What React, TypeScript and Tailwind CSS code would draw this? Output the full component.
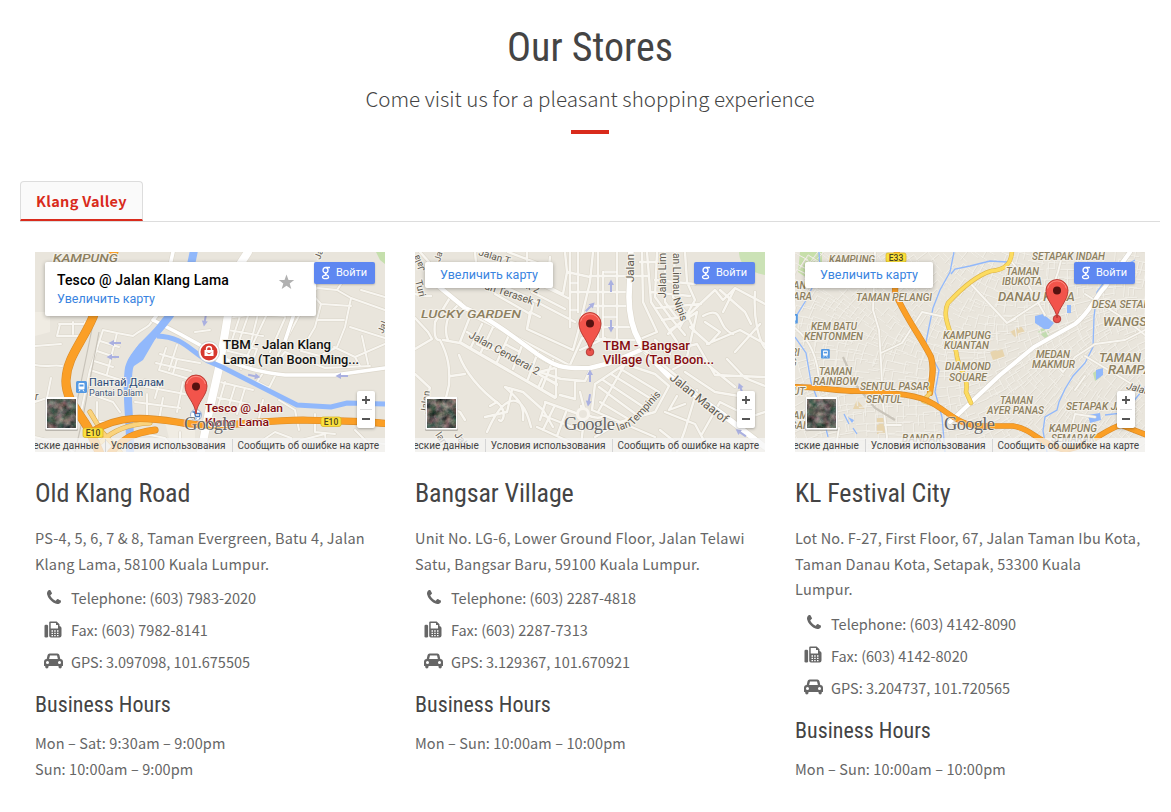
import React from "react";

type Label = { t: string; x: number; y: number; s?: number; w?: number; r?: number; c?: string; i?: boolean; b?: boolean };

const AREA = "#8d8060";
const STREET = "#5f5a50";

function MapLabel({ t, x, y, s = 10, w, r = 0, c = AREA, i = true, b = true }: Label) {
  return (
    <text
      x={x}
      y={y}
      fontSize={s}
      fontWeight={b ? 500 : 400}
      fontStyle={i ? "italic" : "normal"}
      fill={c}
      stroke="#f4f1ea"
      strokeWidth={2.2}
      strokeLinejoin="round"
      paintOrder="stroke"
      textLength={w}
      lengthAdjust="spacingAndGlyphs"
      transform={r ? `rotate(${r} ${x} ${y})` : undefined}
    >
      {t}
    </text>
  );
}

function Roads({ d, w = 2.6, c = "#f8f6f1", casing = "#dcd7cb" }: { d: string; w?: number; c?: string; casing?: string }) {
  return (
    <g fill="none" strokeLinejoin="round" strokeLinecap="round">
      <path d={d} stroke={casing} strokeWidth={w + 1.2} />
      <path d={d} stroke={c} strokeWidth={w} />
    </g>
  );
}

function Highway({ d, w = 7 }: { d: string; w?: number }) {
  return <Roads d={d} w={w} c="#fb9f26" casing="#d98b28" />;
}

function Pin({ x, y }: { x: number; y: number }) {
  return (
    <g transform={`translate(${x} ${y})`}>
      <circle cx="0" cy="0" r="3.8" fill="#e8524c" stroke="#a9302b" strokeWidth="0.8" />
      <path d="M0 -1C-1.5 -12 -11 -18 -11 -28.500A11 11 0 0 1 11 -28.500C11 -18 1.5 -12 0 -1Z" fill="#f2544b" stroke="#b6352e" strokeWidth="0.9" />
      <path d="M-9.4 -30.500A9.6 9.6 0 0 1 9.4 -30.500" fill="none" stroke="#ff8b80" strokeWidth="1" />
      <circle cx="0" cy="-28.500" r="4" fill="#561210" />
    </g>
  );
}

function Arrow({ x, y, r }: { x: number; y: number; r: number }) {
  return (
    <path transform={`translate(${x} ${y}) rotate(${r})`} d="M-6 -1H1V-3L6.500 0L1 3V1H-6Z" fill="#aab0e0" />
  );
}

function Station({ x, y }: { x: number; y: number }) {
  return (
    <g transform={`translate(${x} ${y})`}>
      <rect width="11" height="12" rx="1.500" fill="#5599e2" />
      <rect x="2.500" y="2" width="6" height="6.500" rx="1" fill="#fff" />
      <path d="M3.500 3.500H7.500V5.500H3.500Z" fill="#5599e2" />
      <path d="M3 10.500L4 9M8 10.500L7 9" stroke="#fff" />
    </g>
  );
}

function Shield({ t, x, y }: { t: string; x: number; y: number }) {
  return (
    <g>
      <rect x={x} y={y} width="20" height="9.500" rx="2" fill="#fbe03c" stroke="#d7b21c" strokeWidth="0.700" />
      <text x={x + 10} y={y + 8} fontSize="8.500" textAnchor="middle" fill="#4b4420" fontWeight="500">{t}</text>
    </g>
  );
}

function OldKlangMap() {
  return (
    <>
      <path d="M0 60H15V80L0 84ZM130 170H160V190H135Z" fill="#f0ece3" />
      <path d="M341 0H350V12L345 8Z" fill="#c5dfac" />
      <Roads
        w={2}
        d="M0 94L26 92M24 72H55M25 72L22 84H48M38 70V82M50 70V84M0 113C14 116 18 112 27 114M68 78L82 81L98 84M68 78L55 118L92 130M65 89L84 95M62 99L80 105M59 109L78 115M82 81L72 122M98 84C108 76 116 75 117 68M55 118L46 160M50 140L78 150L85 160M62 150V170H78M125 102L142 107L138 122M131 96L124 118L158 128M142 93L134 118M121 111L156 119M142 107L165 111M110 128L124 132L120 146M101 133L150 142M148 130L142 160M100 150L145 156M112 142V164M128 146L124 168M0 150L12 146L16 126M0 185L28 192L38 200M110 182L130 186L140 200M145 180V200M160 80L175 78M192 66L220 62L250 64M193 78L228 84M190 90L222 97L215 116M223 62L216 90M232 62L206 117M213 64L203 92M205 64L197 88M189 98L214 104M265 62L238 112M250 66L235 100M277 42L282 36L302 38L316 46L310 75L302 95L285 104L266 99L280 75L286 52L277 42M286 52L316 54M282 68H309M302 38L314 20L333 18M316 46L350 58M326 38L350 45M299 95L320 105L350 92M320 105L325 114M315 75L350 86M327 84L333 112M240 112L250 100L290 116L335 114M240 124L234 136L222 130L230 118M185 130L218 138M190 130L182 158M200 134L192 160M210 136L202 162M180 145L214 152M228 148L222 175M244 148L260 158L264 178M280 162V180L300 182M320 178L332 190L350 192M225 190L240 180L256 186L258 200M265 190V200M266 188L290 182L292 200"
      />
      <Roads w={3.6} d="M118 68L145 82L174 98C194 111 215 119 250 123H300L350 116M118 68L126 58L160 30M259 62L248 95M138 0L134 18" c="#fff" />
      <Roads w={8} d="M213 0L200 20L191 75L184 116L174 160L166 200" c="#fff" casing="#e0dbd0" />
      <path d="M155 0C150 26 152 50 128 77C118 90 88 104 83 119" fill="none" stroke="none" />
      <path d="M159 -2C155 20 148 50 128 72C118 86 98 100 94 116C90 140 96 170 95 200" fill="none" stroke="#91b8fb" strokeWidth="8" />
      <path d="M128 73L122 84L108 108L96 116L90 122L93 108L104 92L122 76Z" fill="#91b8fb" />
      <path d="M122 84C148 85 154 98 173 109L187 115L262 153L296 155L312 151L350 152" fill="none" stroke="#91b8fb" strokeWidth="5" />
      <path d="M60 62L42 150M64 80L48 165L40 200" stroke="#c8c3b9" fill="none" strokeWidth="1.200" />
      <Roads w={4} d="M55 160L67 180L85 200M66 190C78 178 95 172 115 171" c="#fad37d" casing="#d8a74b" />
      <Highway w={8} d="M80 -4L58 65C47 91 32 105 31 128C30 150 50 166 56 182L66 204" />
      <Highway w={6} d="M58 179C85 163 110 165 142 170C185 178 218 168 268 168C295 169 325 168 354 172M76 200C90 186 97 181 120 178" />
      <Arrow x={80} y={91} r={180} />
      <Arrow x={78} y={105} r={180} />
      <Arrow x={219} y={124} r={12} />
      <Arrow x={307} y={124} r={180} />
      <Arrow x={170} y={68} r={100} />
      <Shield t="E10" x={48} y={176} />
      <Shield t="E10" x={286} y={165} />
      <MapLabel t="KAMPUNG" x={18} y={9.500} s={11} w={65} />
      <MapLabel t="Jalan" x={285} y={8} s={9} r={-70} c={STREET} i={false} b={false} />
      <MapLabel t="Jal" x={348} y={82} s={9} r={-68} c={STREET} i={false} b={false} />
      <MapLabel t="r" x={0} y={148} s={10} c={STREET} b={false} />
      <Station x={41} y={129} />
      <MapLabel t="Пантай Далам" x={54} y={134} s={11} w={75} c="#2b4a78" i={false} b={false} />
      <MapLabel t="Pantai Dalam" x={54} y={144} s={9} w={54} c="#43577a" i={false} b={false} />
      <circle cx="174" cy="100" r="10.500" fill="#fff" stroke="#bbb" strokeWidth="0.600" />
      <circle cx="174" cy="100" r="8.500" fill="#d7382f" />
      <path d="M169.500 98H178.500V104H169.500Z" fill="#fff" />
      <path d="M171.500 98V97A2.500 2.500 0 0 1 176.500 97V98" fill="none" stroke="#fff" strokeWidth="1.400" />
      <path d="M172 100.500A2.200 2.200 0 0 0 176 100.500" fill="none" stroke="#d7382f" strokeWidth="1" />
      <MapLabel t="TBM - Jalan Klang" x={188} y={96.500} s={12} w={108} c="#111" i={false} />
      <MapLabel t="Lama (Tan Boon Ming..." x={188} y={111.500} s={12} w={136} c="#111" i={false} />
      <MapLabel t="Tesco @ Jalan" x={170} y={160} s={11.500} w={78} c="#850b10" i={false} />
      <MapLabel t="Klang Lama" x={170} y={174} s={11.500} w={64} c="#850b10" i={false} />
      <circle cx="161" cy="163" r="5.500" fill="#fff" stroke="#7798c8" strokeWidth="0.700" />
      <path d="M157.500 160H159.500L160.500 164.500H164.500L165 161.500H160M161 166.500H161.500M164 166.500H164.500" stroke="#4679bd" fill="none" strokeWidth="1.300" />
      <path d="M161 162C160 150 150 144 150 134A11 11 0 0 1 172 134C172 144 162 150 161 162Z" fill="#f2544b" stroke="#b6352e" strokeWidth="0.900" />
      <path d="M151.600 132A9.600 9.600 0 0 1 170.400 132" fill="none" stroke="#ff8b80" strokeWidth="1" />
      <circle cx="161" cy="134.500" r="4" fill="#561210" />
    </>
  );
}

function BangsarMap() {
  return (
    <>
      <path d="M324 0C324 12 333 20 350 23V0Z" fill="#cbe2b6" />
      <Roads
        w={2.4}
        d="M0 66L13 80L17 87L0 97M0 42L8 44H16M5 0L14 10L20 32M36 44L20 70C18 90 24 88 25 88C34 105 35 118 34 133L30 150M28 88L45 91L130 140M36 45L46 50L36 60C30 70 30 82 33 88M56 62L45 90M60 65L105 87L154 113M52 80L142 133M45 90L140 145M78 75L66 100M94 83L82 110M108 91L98 117M123 100L113 127M138 108L127 136M67 72L56 95M62 92L72 97M90 92L105 100M120 103L132 110M60 88L142 132M44 103C50 120 65 138 84 152C92 160 88 172 84 168M36 124L50 122M75 154L82 150M90 135C100 145 110 150 108 168M90 135L108 140L128 158L138 175M97 138L92 160L70 165M72 180C85 150 105 130 116 175M0 122L15 136L13 142M20 150L45 160L50 168M50 32L62 22L118 52L112 77L158 98L163 80L175 30L178 0M62 22L60 0M74 15L90 6M84 32L118 48L160 70M80 42L115 62M112 77L115 60L125 65M93 30L96 10L128 20M93 0L130 14M112 0V20M120 30L155 47M117 40L150 57M110 20L124 30L148 42L152 20L150 0M152 20L175 25M135 5L132 35M125 120L146 127L170 129L175 118M127 127L123 136L140 146M141 117V145M124 120L140 116M130 152L125 168M130 150L172 165M139 155L128 178M151 160L142 184M127 163L165 178M122 175L155 190M165 140L170 160L168 165M160 130V147L145 143M155 0V75M163 0V60M155 40H215M175 24H215M175 54H213M183 0V86M188 20V85M202 0V88M175 75H214M165 98L190 86M155 113L167 86L202 88H220M225 87L242 80L228 50L227 0M215 24H232M225 10H242M232 0L236 50L252 75L262 90M242 0L240 45L255 65L270 83M250 0L250 50L262 66M260 0L258 45L272 62L280 80M270 0L272 30L280 48L265 75M240 28L280 32M236 40L275 44M240 56L286 52M247 68L275 64M255 78L282 60M253 82L300 38L308 48L320 36L350 52M320 36L308 60M282 60L272 105M275 75L294 92L305 80L290 70M292 92L325 78L350 92M320 100L345 72M312 107L330 126L350 134M340 40C338 70 345 90 350 96M250 100L282 92L300 123L350 125M257 118L282 104L320 135M270 120L300 140L330 145M288 64C310 52 300 75 318 82M305 38L330 60L336 72M262 144L254 158L270 152M250 160L280 172L295 200M282 138L270 178L262 200M305 150L335 165L350 160M305 150L287 182M245 178L260 190L255 200M183 160L210 112L240 122L254 134L240 160L205 170L177 158L180 132L210 112M184 135L222 163M188 128L230 156M196 122L238 148M204 116L244 140M185 150L215 168M188 165C176 168 166 160 166 154M170 160L165 200M205 170L240 185M180 185L205 170"
      />
      <Roads w={4.4} d="M22 33L50 56C75 66 100 86 122 102C140 114 145 117 175 116L195 111L228 97" c="#fff" />
      <Roads w={5.6} d="M216 -3L214 45C214 85 230 100 255 125L307 162L350 195" c="#fff" />
      <Roads w={2.7} d="M228 97L263 125L285 145L293 153M240 88L255 102" />
      <circle cx="168" cy="162" r="5.500" fill="#e9e5dc" stroke="#f8f5ef" strokeWidth="3" />
      <path d="M155 31H163M155 58H163M188 20H202M188 65H202" stroke="#fff" />
      <Arrow x={196} y={34} r={-90} />
      <Arrow x={196} y={74} r={90} />
      <Arrow x={175} y={55} r={-45} />
      <Arrow x={175} y={124} r={-90} />
      <Arrow x={174} y={148} r={100} />
      <Arrow x={326} y={181} r={-145} />
      <Arrow x={326} y={137} r={-110} />
      <MapLabel t="Jalan T" x={63} y={3} s={10} r={17} c={STREET} i={false} b={false} />
      <MapLabel t="Jala" x={10} y={18} s={9} r={-112} c={STREET} i={false} b={false} />
      <MapLabel t="Jal" x={25} y={10} s={9} r={-75} c={STREET} i={false} b={false} />
      <MapLabel t="Turi" x={0} y={29} s={10} r={75} c={STREET} i={false} b={false} />
      <MapLabel t="sek 2" x={101} y={32} s={10} r={24} c={STREET} i={false} b={false} />
      <MapLabel t="an Terasek 1" x={69} y={37} s={10.500} w={59} r={18} c={STREET} i={false} b={false} />
      <MapLabel t="LUCKY GARDEN" x={6} y={66} s={11.500} w={100} />
      <MapLabel t="Jalan Cenderai 2" x={53} y={85} s={11} w={79} r={29} c={STREET} i={false} b={false} />
      <MapLabel t="Jalan" x={12} y={162} s={9.500} r={-83} c={STREET} i={false} b={false} />
      <MapLabel t="Jala" x={39} y={183} s={10} r={55} c={STREET} i={false} b={false} />
      <MapLabel t="lan" x={20} y={183} s={10} r={55} c={STREET} i={false} b={false} />
      <MapLabel t="Jalan" x={219} y={30} s={10.500} w={28} r={-90} c={STREET} i={false} b={false} />
      <MapLabel t="Jalan Lim" x={251} y={46} s={10.500} w={45} r={-90} c={STREET} i={false} b={false} />
      <MapLabel t="an Limau" x={258} y={1} s={10.500} w={42} r={90} c={STREET} i={false} b={false} />
      <MapLabel t="Nipis" x={258} y={47} s={10.500} r={70} c={STREET} i={false} b={false} />
      <MapLabel t="Jalan Maarof" x={254} y={127} s={12} w={71} r={39} c={STREET} i={false} b={false} />
      <MapLabel t="lan" x={203} y={179} s={10.500} r={-20} c={STREET} i={false} b={false} />
      <MapLabel t="Tempinis" x={218} y={174} s={10.500} w={42} r={-48} c={STREET} i={false} b={false} />
      <MapLabel t="TBM - Bangsar" x={188} y={97.500} s={12} w={87} c="#850b10" i={false} />
      <MapLabel t="Village (Tan Boon..." x={188} y={111.500} s={12} w={111} c="#850b10" i={false} />
      <Pin x={175} y={100} />
    </>
  );
}

const sideStreets = (() => {
  let seed = 41;
  const rnd = () => (seed = (seed * 16807) % 2147483647) / 2147483647;
  let d = "";
  for (let gy = -2; gy < 200; gy += 9) {
    for (let gx = -2; gx < 350; gx += 10) {
      const x = gx + rnd() * 6;
      const y = gy + rnd() * 5;
      const a = Math.sin(gx / 60) * 0.5 + Math.cos(gy / 50) * 0.5;
      const l = 7 + rnd() * 10;
      const p = (vx: number, vy: number) => `${vx.toFixed(1)} ${vy.toFixed(1)}`;
      d += `M${p(x, y)}L${p(x + Math.cos(a) * l, y + Math.sin(a) * l)}`;
      if (rnd() > 0.25) d += `M${p(x, y)}L${p(x - Math.sin(a) * l, y + Math.cos(a) * l)}`;
    }
  }
  return d;
})();

const festivalLabels: Label[] = [
  { t: "KAMPUNG", x: 34, y: 11, w: 46 },
  { t: "AN", x: -2, y: 37 },
  { t: "ARA", x: -2, y: 48 },
  { t: "TAMAN PELANGI", x: 61, y: 49, w: 76 },
  { t: "KEM BATU", x: 16, y: 78, w: 46 },
  { t: "KENTONMEN", x: 9, y: 88, w: 59 },
  { t: "KAMPUNG", x: 148, y: 87, w: 48 },
  { t: "KUANTAN", x: 149, y: 97, w: 45 },
  { t: "RI", x: -4, y: 104 },
  { t: "G", x: -5, y: 114 },
  { t: "DIAMOND", x: 150, y: 118, w: 46 },
  { t: "SQUARE", x: 154, y: 129, w: 38 },
  { t: "TAMAN", x: 24, y: 123, w: 33 },
  { t: "RAINBOW", x: 18, y: 133, w: 45 },
  { t: "SENTUL PASAR", x: 65, y: 138, w: 69 },
  { t: "SENTUL", x: 71, y: 151, w: 36 },
  { t: "UT", x: -2, y: 143 },
  { t: "AM", x: -2, y: 167 },
  { t: "GAN", x: -5, y: 177 },
  { t: "BANDAR", x: 107, y: 190, w: 40 },
  { t: "SETAPAK INDAH", x: 237, y: 8, w: 73 },
  { t: "TAMAN", x: 211, y: 23, w: 33 },
  { t: "IBUKOTA", x: 207, y: 33, w: 40 },
  { t: "DANAU KOTA", x: 203, y: 49, w: 77, s: 12 },
  { t: "DESA SETAPAK", x: 297, y: 56, w: 70 },
  { t: "WANGSA", x: 308, y: 74, w: 52, s: 12 },
  { t: "MEDAN", x: 241, y: 106, w: 34 },
  { t: "MAKMUR", x: 237, y: 116, w: 43 },
  { t: "TAMAN", x: 304, y: 110, w: 42, s: 12 },
  { t: "RAMPAI", x: 313, y: 122, w: 48, s: 12 },
  { t: "TAMAN", x: 205, y: 152, w: 33 },
  { t: "AYER PANAS", x: 192, y: 162, w: 57 },
  { t: "SETAPAK JAYA", x: 271, y: 158, w: 68 },
  { t: "KAMPUNG", x: 254, y: 180, w: 48 },
  { t: "SEMARAK", x: 256, y: 190, w: 44 },
];

function FestivalMap() {
  return (
    <>
      <path d="M5 0H27V16L12 26L3 20Z" fill="#c7dfaa" />
      <path d="M62 148L70 157H58ZM215 80L226 74L230 80L220 85ZM195 100L207 96L210 105L198 108ZM220 145H238L236 154L220 152ZM82 166H90V182H82Z" fill="#e7d4ad" />
      <path d="M243 80L249 73L255 82L251 87ZM298 121L304 117L306 125L300 129Z" fill="#c2dcb0" />
      <path d={sideStreets} transform="translate(0.7 0.7)" fill="none" stroke="#ddd8ce" strokeWidth="0.800" />
      <path d={sideStreets} fill="none" stroke="#f3f0ea" strokeWidth="0.900" />
      <path d="M24 0L25 18L18 34L10 50L0 66M0 85L11 101L16 130L27 160L33 185M159 0L155 20L145 38L138 56L134 75L130 95L138 107L144 118L140 140L147 165L150 200M175 14L160 17L156 22M175 14L195 9L212 10M340 8L322 18L310 29L302 40L299 65L298 95L290 111L278 124L270 137L264 150L262 158L250 165L248 179L252 200M350 135L338 150L328 161L310 163M49 162L54 172M58 176L62 182" fill="none" stroke="#91b8fb" strokeWidth="1.300" />
      <path d="M240 64L248 62L259 71L254 77H249L240 71ZM272 53H276V61H272ZM301 118L308 116L308 123L301 128ZM293 163L305 161L306 168L295 171ZM320 100L327 102L324 106ZM53 165L59 168L57 171Z" fill="#91b8fb" />
      <Roads w={1.900} d="M0 76C15 88 23 105 24 130L28 140M80 0L78 58L84 78L86 110L88 152L92 185L90 200M86 101L107 91L127 60L150 65M175 31L212 71L255 43L263 20L268 0M212 71L220 67M215 8L227 22L250 63M290 42L330 67L350 83M239 96L253 104L268 120L280 105L300 92L330 88L350 78M290 104L325 125L350 140M280 138L290 124M175 152L155 171M90 173H106M40 200L44 176M270 200L280 162L300 165" />
      <Roads w={4.200} d="M155 170L205 123L239 95L280 72C295 61 300 45 310 35L335 0" c="#fff" casing="#d9d4ca" />
      <path d="M48 105L60 132L80 156L100 168" fill="none" stroke="#c9c4ba" strokeWidth="2.200" />
      <Roads w={3.400} d="M217 -3C217 12 210 18 196 19C180 24 165 38 153 51C145 66 160 85 162 105C165 120 174 126 171 140L176 151" c="#fcdc60" casing="#dfb64d" />
      <Highway w={5} d="M102 -4L100 40C108 62 126 85 136 105C140 118 136 129 135 141" />
      <Roads w={3} d="M135 141L128 149L140 153" c="#fcd26c" casing="#dfb64d" />
      <Highway w={4.500} d="M-3 135C20 134 45 140 65 139C90 141 120 141 137 151C155 161 165 175 190 174H218C238 177 246 193 270 198C296 194 308 178 326 173L354 184" />
      <g transform="translate(26 97) scale(0.8)"><Station x={0} y={0} /></g>
      <g transform="translate(-6 62) scale(0.8)"><Station x={0} y={0} /></g>
      <Shield t="E33" x={91} y={1} />
      {festivalLabels.map((l, n) => (
        <MapLabel key={n} {...l} />
      ))}
      <MapLabel t="Jalan" x={331} y={137} s={10} r={14} c={STREET} b={false} />
      <Pin x={262} y={67} />
    </>
  );
}

function MapFrame({ title, id, children }: { title?: string; id: number; children: React.ReactNode }) {
  return (
    <div className="relative h-[200px] w-[350px] overflow-hidden bg-[#e9e5dc] font-['Roboto',sans-serif]">
      <svg width="350" height="200" viewBox="0 0 350 200" className="block">
        {children}
        <text x="149" y="178" fontSize="18.500" textLength="51" fill="#666" stroke="#fff" strokeOpacity="0.500" strokeWidth="1.500" paintOrder="stroke" className="font-['Liberation_Serif',serif]">Google</text>
        <filter id={`aerial${id}`} x="0" y="0" width="100%" height="100%" colorInterpolationFilters="sRGB">
          <feTurbulence type="fractalNoise" baseFrequency="0.14" numOctaves="4" seed={id * 7} />
          <feColorMatrix values="0.7 0.2 0 0 -0.07  0.4 0.4 0 0 -0.02  0.45 0.3 0.1 0 -0.07  0 0 0 0 1" />
        </filter>
        <rect x="10" y="145" width="33" height="34" rx="1.500" fill="#8b877f" opacity="0.500" />
        <rect x="10.500" y="145" width="32" height="32.500" rx="1" fill="#fff" />
        <rect x="12" y="147" width="29" height="28.500" filter={`url(#aerial${id})`} />
      </svg>
      {title ? (
        <div className="absolute top-[10px] left-[10px] h-[54px] w-[271px] rounded-[2px] bg-white pt-[10px] pl-3 shadow-[0_1px_4px_rgba(0,0,0,0.3)]">
          <div className="text-[14px] leading-[17px] font-medium tracking-[0.120px] whitespace-nowrap text-black">{title}</div>
          <div className="mt-[2px] text-[12.500px] leading-[16px] text-[#3a84df]">Увеличить карту</div>
          <svg className="absolute top-[12px] left-[233px]" width="17" height="16" viewBox="0 0 17 16">
            <path d="M8.500 0.500L10.500 6H16.200L11.700 9.400L13.300 15L8.500 11.700L3.700 15L5.300 9.400L0.800 6H6.500Z" fill="#b1b1b1" />
          </svg>
        </div>
      ) : (
        <div className="absolute top-[10px] left-[10px] flex h-[26px] w-[128px] items-center justify-center rounded-[2px] bg-white text-[12.500px] whitespace-nowrap text-[#3a84df] shadow-[0_1px_4px_rgba(0,0,0,0.3)]">
          Увеличить карту
        </div>
      )}
      <div className="absolute top-[10px] left-[279px] flex h-[22px] w-[61px] items-center rounded-[2px] bg-[#5e87f1] pl-[7px] text-white shadow-[0_1px_2px_rgba(0,0,0,0.2)]">
        <svg width="10" height="14" viewBox="0 0 10 14" fill="none" stroke="#fff" strokeWidth="1.300">
          <ellipse cx="4.500" cy="4.200" rx="2.500" ry="2.700" />
          <path d="M5 1.500H9M5.500 6.700C3.500 8 4 8.300 5.500 8.800C8.500 9.800 8.500 12.700 4.500 12.700C0.500 12.700 0.500 9.500 4.500 9.300" />
        </svg>
        <span className="pt-px pl-[5px] text-[11px]">Войти</span>
      </div>
      <div className="absolute top-[139px] left-[322px] flex h-[37px] w-[18px] flex-col items-center rounded-[2px] bg-white shadow-[0_1px_3px_rgba(0,0,0,0.3)]">
        <svg width="18" height="37" viewBox="0 0 18 37">
          <path d="M5 9H13M9 5V13M5 28H13" stroke="#555" strokeWidth="1.800" />
          <path d="M3 18.500H15" stroke="#ddd" />
        </svg>
      </div>
      <div className="absolute inset-x-0 bottom-0 flex h-[14px] items-center justify-end bg-[#f5f5f5]/75 pt-px pr-[6px] text-[10px] leading-[13px] whitespace-nowrap text-[#444]">
        <span>Картографические данные</span>
        <span className="ml-[6px] border-l border-[#d5d5d5] pl-[5px]">Условия использования</span>
        <span className="ml-[6px] border-l border-[#d5d5d5] pl-[5px]">Сообщить об ошибке на карте</span>
      </div>
    </div>
  );
}

function PhoneIcon() {
  return (
    <svg className="mt-[-3px] ml-px" width="14" height="14" viewBox="0 128 1408 1408" fill="#666">
      <path d="M1408 1240q0 27-10 70.500t-21 68.500q-21 50-122 106-94 51-186 51-27 0-52.500-3.500t-57.500-12.500-47.500-14.500-55.500-20.500-49-18q-98-35-175-83-128-79-264.500-215.500t-215.500-264.500q-48-77-83-175-3-9-18-49t-20.500-55.500-14.500-47.500-12.500-57.500-3.500-52.500q0-92 51-186 56-101 106-122 25-11 68.500-21t70.500-10q14 0 21 3 18 6 53 76 11 19 30 54t35 63.500 31 53.500q3 4 17.500 25t21.500 35.500 7 28.500q0 20-28.500 50t-62 55-62 53-28.500 46q0 9 5 22.500t8.500 20.500 14 24 11.500 19q76 137 174 235t235 174q2 1 19 11.500t24 14 20.500 8.500 22.500 5q18 0 46-28.500t53-62 55-62 50-28.500q14 0 28.500 7t35.500 21.500 25 17.500q25 15 53.500 31t63.500 35 54 30q70 35 76 53 3 7 3 21z" />
    </svg>
  );
}

function FaxIcon() {
  return (
    <svg className="mt-[-2px]" width="18" height="17" viewBox="0 0 18 17">
      <rect x="0.500" y="3.700" width="3.600" height="12.800" rx="1.300" fill="#666" />
      <path d="M5.200 1.500Q5.200 0.500 6.200 0.500H12.700L15.500 3.300V5Q17.500 5.300 17.500 7V14.500Q17.500 16.500 15.500 16.500H7Q5.200 16.500 5.200 14.800Z" fill="#666" />
      <path d="M6.700 2H12V4H14V7.500H6.700Z" fill="#fff" />
      <path d="M7.500 9.300H9V10.800H7.500ZM10.200 9.300H11.700V10.800H10.200ZM13 9.300H14.500V10.800H13ZM7.500 11.700H9V13.100H7.500ZM10.200 11.700H11.700V13.100H10.200ZM13 11.700H14.500V13.100H13ZM7.500 14H9V15.300H7.500ZM10.200 14H11.700V15.300H10.200ZM13 14H14.500V15.300H13Z" fill="#fff" />
    </svg>
  );
}

function CarIcon() {
  return (
    <svg className="mt-[-2px]" width="19" height="16" viewBox="0 0 19 16">
      <path fillRule="evenodd" d="M5.600 0.500H13.400Q15 0.500 15.400 2L16.300 6Q19 6.300 19 8.800V12.500Q19 13 18.400 13H17.800V13.800Q17.800 15.500 16.200 15.500Q14.500 15.500 14.500 13.800V13H4.500V13.800Q4.500 15.500 2.800 15.500Q1.200 15.500 1.200 13.800V13H0.600Q0 13 0 12.500V8.800Q0 6.300 2.700 6L3.600 2Q4 0.500 5.600 0.500ZM6 2.500L5.100 6H13.900L13 2.500ZM3.500 7.900A1.500 1.500 0 1 0 3.500 10.900A1.500 1.500 0 1 0 3.500 7.900ZM15.500 7.900A1.500 1.500 0 1 0 15.500 10.900A1.500 1.500 0 1 0 15.500 7.900Z" fill="#666" />
    </svg>
  );
}

type Store = {
  name: string;
  mapTitle?: string;
  map: React.ReactNode;
  address: string[];
  phone: string;
  fax: string;
  gps: string;
  hours: string[];
};

const stores: Store[] = [
  {
    name: "Old Klang Road",
    mapTitle: "Tesco @ Jalan Klang Lama",
    map: <OldKlangMap />,
    address: ["PS-4, 5, 6, 7 & 8, Taman Evergreen, Batu 4, Jalan", "Klang Lama, 58100 Kuala Lumpur."],
    phone: "(603) 7983-2020",
    fax: "(603) 7982-8141",
    gps: "3.097098, 101.675505",
    hours: ["Mon – Sat: 9:30am – 9:00pm", "Sun: 10:00am – 9:00pm"],
  },
  {
    name: "Bangsar Village",
    map: <BangsarMap />,
    address: ["Unit No. LG-6, Lower Ground Floor, Jalan Telawi", "Satu, Bangsar Baru, 59100 Kuala Lumpur."],
    phone: "(603) 2287-4818",
    fax: "(603) 2287-7313",
    gps: "3.129367, 101.670921",
    hours: ["Mon – Sun: 10:00am – 10:00pm"],
  },
  {
    name: "KL Festival City",
    map: <FestivalMap />,
    address: ["Lot No. F-27, First Floor, 67, Jalan Taman Ibu Kota,", "Taman Danau Kota, Setapak, 53300 Kuala", "Lumpur."],
    phone: "(603) 4142-8090",
    fax: "(603) 4142-8020",
    gps: "3.204737, 101.720565",
    hours: ["Mon – Sun: 10:00am – 10:00pm"],
  },
];

function ContactRow({ icon, children }: { icon: React.ReactNode; children: React.ReactNode }) {
  return (
    <li className="flex h-8 items-center">
      <span className="flex w-[36px] justify-center">{icon}</span>
      <span className="whitespace-nowrap">{children}</span>
    </li>
  );
}

function StoreCard({ store, id }: { store: Store; id: number }) {
  return (
    <article className="w-[350px]">
      <MapFrame title={store.mapTitle} id={id}>{store.map}</MapFrame>
      <h3 className="mt-[25px] h-[32px] font-['Roboto_Condensed','Roboto',sans-serif] text-[26px] leading-[32px] tracking-[-0.100px] whitespace-nowrap text-[#444]">{store.name}</h3>
      <div className="mt-[16px] tracking-[0.190px]">
        {store.address.map((line) => (
          <p key={line} className="h-[25.500px] leading-[25.500px] whitespace-nowrap">{line}</p>
        ))}
      </div>
      <ul className="mt-[6px]">
        <ContactRow icon={<PhoneIcon />}>Telephone: {store.phone}</ContactRow>
        <ContactRow icon={<FaxIcon />}>Fax: {store.fax}</ContactRow>
        <ContactRow icon={<CarIcon />}>GPS: {store.gps}</ContactRow>
      </ul>
      <h4 className="mt-[13px] h-[28px] font-['Roboto_Condensed','Roboto',sans-serif] text-[22px] leading-[28px] text-[#444]">Business Hours</h4>
      <div className="mt-[11px] tracking-[0.100px]">
        {store.hours.map((line) => (
          <p key={line} className="h-[25.600px] leading-[25.600px] whitespace-nowrap">{line}</p>
        ))}
      </div>
    </article>
  );
}

export default function App() {
  return (
    <main className="h-[812px] w-[1171px] overflow-hidden bg-white font-['Noto_Sans_CJK_SC',sans-serif] text-[14.500px] text-[#666]">
      <div className="ml-5 w-[1140px]">
        <header className="flex flex-col items-center pt-[23px]">
          <h1 className="h-[50px] font-['Roboto_Condensed','Roboto',sans-serif] text-[40px] leading-[50px] text-[#444]">Our Stores</h1>
          <p className="mt-[9px] h-[32px] text-[20.550px] leading-[32px] font-light whitespace-nowrap text-[#444]">Come visit us for a pleasant shopping experience</p>
          <div className="mt-[16px] h-1 w-[38px] bg-[#d92b1c]" />
        </header>
        <nav className="mt-[47px] flex h-[41px] border-b border-[#ddd]">
          <button className="h-10 w-[123px] rounded-t-[4px] border border-b-2 border-[#ddd] border-b-[#d92b1c] bg-[#fafafa] text-[14.500px] font-bold tracking-[0.300px] text-[#d92b1c]">Klang Valley</button>
        </nav>
        <section className="mt-[30px] flex gap-[30px] pl-[15px]">
          {stores.map((s, n) => (
            <StoreCard key={s.name} store={s} id={n + 1} />
          ))}
        </section>
      </div>
    </main>
  );
}
